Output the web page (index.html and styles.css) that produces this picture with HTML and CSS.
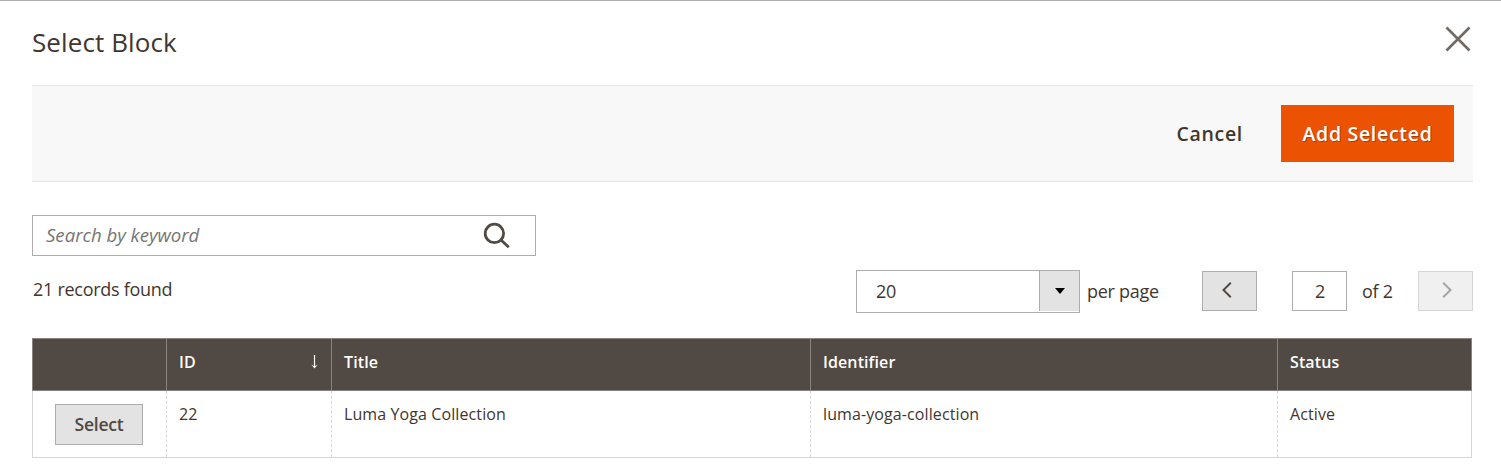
FILE: index.html
```html
<!DOCTYPE html>
<html lang="en">
<head>
<meta charset="utf-8">
<title>Select Block</title>
<link rel="stylesheet" href="styles.css">
</head>
<body>
<main class="modal">
  <header class="modal-header">
    <h1 class="modal-title">Select Block</h1>
    <button class="close" aria-label="Close">
      <svg width="26" height="26" viewBox="0 0 26 26"><path d="M1.5 1.5 24.5 24.5M24.5 1.5 1.5 24.5"/></svg>
    </button>
  </header>
  <div class="actions">
    <button class="cancel">Cancel</button>
    <button class="primary">Add Selected</button>
  </div>
  <div class="search">
    <span class="placeholder">Search by keyword</span>
    <svg class="search-icon" width="28" height="28" viewBox="0 0 28 28"><circle cx="11.4" cy="11.4" r="9.2"/><path d="M18 18 25.8 25.3"/></svg>
  </div>
  <div class="toolbar">
    <span class="records">21 records found</span>
    <div class="select"><span class="select-value">20</span><span class="select-toggle"><svg width="10" height="6" viewBox="0 0 10 6"><path d="M0 0H10L5 6Z"/></svg></span></div>
    <span class="per-page">per page</span>
    <button class="page-button" aria-label="Previous page"><svg width="10" height="16" viewBox="0 0 10 16"><path d="M8.8.8 1.5 8 8.8 15.2"/></svg></button>
    <span class="page-current">2</span>
    <span class="page-total">of 2</span>
    <button class="page-button disabled" aria-label="Next page" disabled><svg width="10" height="16" viewBox="0 0 10 16"><path d="M1.2.8 8.5 8 1.2 15.2"/></svg></button>
  </div>
  <div class="grid">
    <div class="row head">
      <div class="cell"></div>
      <div class="cell sorted"><span>ID</span><svg width="7" height="14" viewBox="0 0 7 14"><path class="shaft" d="M3.5 0V12"/><path class="tip" d="M.3 9.6 3.5 13.6 6.7 9.6 3.5 11.4Z"/></svg></div>
      <div class="cell"><span>Title</span></div>
      <div class="cell"><span>Identifier</span></div>
      <div class="cell"><span>Status</span></div>
    </div>
    <div class="row body">
      <div class="cell pick"><button class="select-button">Select</button></div>
      <div class="cell"><span>22</span></div>
      <div class="cell"><span>Luma Yoga Collection</span></div>
      <div class="cell"><span>luma-yoga-collection</span></div>
      <div class="cell"><span>Active</span></div>
    </div>
  </div>
</main>
</body>
</html>
```
FILE: styles.css
```css
* { box-sizing: border-box; }
body {
  margin: 0;
  background: #fff;
  color: #41362f;
  font-family: "Open Sans", "Noto Sans", sans-serif;
}
button {
  margin: 0;
  padding: 0;
  border: 0;
  background: none;
  color: inherit;
  font-family: inherit;
}
svg { display: block; fill: none; }
.modal {
  height: 474px;
  overflow: hidden;
  border-top: 1px solid #adadad;
  padding: 0 28px 0 32px;
}
.modal-header {
  display: flex;
  justify-content: space-between;
  height: 84px;
}
.modal-title {
  margin: 0;
  padding-top: 23px;
  font-size: 26px;
  font-weight: 400;
  line-height: 36px;
  letter-spacing: .1px;
}
.close { align-self: flex-start; margin: 25px 2px 0 0; }
.close svg { stroke: #736963; stroke-width: 2.6; }
.actions {
  display: flex;
  justify-content: flex-end;
  align-items: center;
  gap: 38px;
  height: 97px;
  padding-right: 19px;
  border-top: 1px solid #e3e3e3;
  border-bottom: 1px solid #e3e3e3;
  background: #f8f8f8;
}
.cancel, .primary {
  font-size: 19.5px;
  font-weight: 600;
  letter-spacing: .7px;
}
.primary {
  width: 173px;
  height: 57px;
  background: #eb5202;
  color: #fff;
  text-shadow: 1px 1px 0 rgba(0, 0, 0, .25);
}
.search {
  display: flex;
  justify-content: space-between;
  align-items: center;
  width: 504px;
  height: 41px;
  margin-top: 33px;
  padding: 0 24px 0 13px;
  border: 1px solid #adadad;
}
.placeholder {
  padding-bottom: 2px;
  color: #757575;
  font-size: 18.6px;
  font-style: italic;
}
.search-icon { stroke: #514943; stroke-width: 2.8; }
.toolbar {
  display: flex;
  align-items: flex-start;
  height: 82px;
  padding-top: 14px;
  font-size: 18px;
  line-height: 25px;
  letter-spacing: -.28px;
}
.records { width: 824px; padding: 7px 0 0 1px; }
.select {
  display: flex;
  width: 224px;
  height: 43px;
  border: 1px solid #adadad;
}
.select-value { flex: 1; padding: 8px 0 0 19px; }
.select-toggle {
  display: flex;
  align-items: center;
  justify-content: center;
  width: 40px;
  height: 40px;
  border-left: 1px solid #adadad;
  background: #e3e3e3;
}
.select-toggle path { fill: #000; }
.per-page { width: 122px; padding: 9px 0 0 7px; }
.page-button, .page-current {
  display: flex;
  align-items: center;
  justify-content: center;
  width: 55px;
  height: 40px;
  margin-top: 1px;
  border: 1px solid #adadad;
}
.page-button { padding: 0 5px 2px 0; background: #e3e3e3; }
.page-button svg { stroke: #514943; stroke-width: 2; }
.page-button.disabled { padding: 0 0 2px 2px; opacity: .5; }
.page-current { margin-left: 35px; padding-left: 1px; }
.page-total { width: 71px; padding: 9px 0 0 15px; }
.grid { width: 1440px; }
.row { display: grid; grid-template-columns: 134px 165px 479px 467px 195px; }
.cell { padding-left: 12px; font-size: 16px; line-height: 22px; letter-spacing: .1px; }
.head {
  height: 53px;
  border-top: 1px solid #8a837f;
  border-bottom: 1px solid #8a837f;
  background: #514943;
  color: #fff;
  font-weight: 600;
}
.head .cell { padding-top: 12px; border-left: 1px solid #8a837f; }
.head .cell:last-child { border-right: 1px solid #8a837f; }
.head .sorted { display: flex; justify-content: space-between; padding-right: 13px; }
.sorted svg { margin-top: 4px; }
.shaft { stroke: #fff; stroke-width: 1.2; }
.tip { fill: #fff; }
.body { height: 67px; border-bottom: 1px solid #d6d6d6; }
.body .cell { padding-top: 12px; border-left: 1px dashed #d6d6d6; }
.body .cell:first-child { border-left-style: solid; }
.body .cell:last-child { border-right: 1px solid #d6d6d6; }
.body .pick { padding: 13px 0 0 22px; }
.select-button {
  display: block;
  width: 88px;
  height: 41px;
  padding-bottom: 1px;
  border: 1px solid #adadad;
  background: #e3e3e3;
  color: #514943;
  font-size: 17.6px;
  font-weight: 600;
  letter-spacing: -.25px;
}
```
